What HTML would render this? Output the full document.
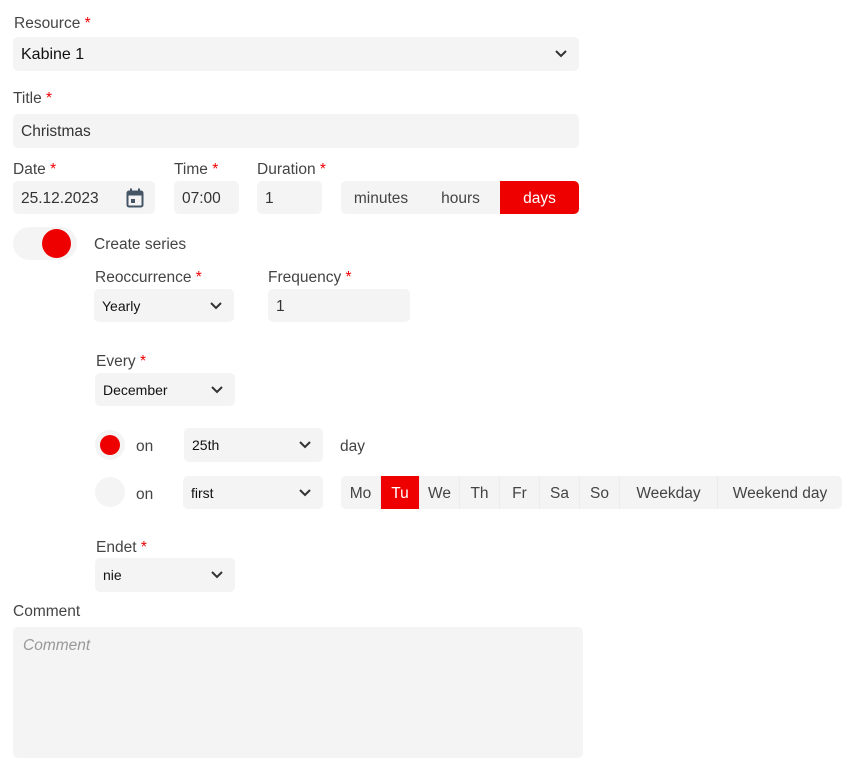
<!DOCTYPE html>
<html><head><style>
*{box-sizing:border-box;margin:0;padding:0}
body{width:858px;height:768px;background:#fff;font-family:"Liberation Sans",Arial,sans-serif;color:#333;position:relative;overflow:hidden}
.a{position:absolute}
.lbl{position:absolute;font-size:15.5px;color:#444;line-height:18px;margin-top:1px}
.lbl b{color:#e00;font-weight:normal}
.box{position:absolute;background:#f4f4f4;border-radius:5px;font-size:15.5px;color:#333;display:flex;align-items:center;padding-left:8px;padding-top:2px}
.sm{font-size:14px;color:#111;padding-top:0}
.chev{position:absolute;right:12px;top:50%;margin-top:-4px}
.seg{position:absolute;display:flex;background:#f4f4f4;border-radius:5px;overflow:hidden;font-size:15.5px;color:#444}
.seg div{display:flex;align-items:center;justify-content:center;border-right:1px solid #ececec;padding-top:2px}
.seg .on{background:#e00;color:#fff}
.t{position:absolute;font-size:15.5px;color:#444}
</style></head><body>
<div class="lbl" style="left:14px;top:14px">Resource <b>*</b></div>
<div class="box" style="left:13px;top:37px;width:566px;height:34px;color:#111;font-size:16px">Kabine 1<svg class="chev" width="12" height="8" viewBox="0 0 12 8"><path d="M1 1l5 5 5-5" stroke="#333" stroke-width="2" fill="none"/></svg></div>
<div class="lbl" style="left:13px;top:89px">Title <b>*</b></div>
<div class="box" style="left:13px;top:114px;width:566px;height:34px">Christmas</div>
<div class="lbl" style="left:13px;top:160px">Date <b>*</b></div>
<div class="lbl" style="left:174px;top:160px">Time <b>*</b></div>
<div class="lbl" style="left:257px;top:160px">Duration <b>*</b></div>
<div class="box" style="left:13px;top:181px;width:142px;height:33px">25.12.2023
<svg class="a" style="left:113px;top:7px" width="18" height="20" viewBox="0 0 18 20"><rect x="1.5" y="3.5" width="15" height="15" rx="1.5" stroke="#456" stroke-width="2" fill="none"/><rect x="1.5" y="3.5" width="15" height="4" fill="#456"/><rect x="4" y="0.5" width="2" height="4" fill="#456"/><rect x="12" y="0.5" width="2" height="4" fill="#456"/><rect x="5" y="11" width="4" height="4" fill="#456"/></svg></div>
<div class="box" style="left:174px;top:181px;width:65px;height:33px">07:00</div>
<div class="box" style="left:257px;top:181px;width:65px;height:33px">1</div>
<div class="seg" style="left:341px;top:181px;width:238px;height:33px"><div style="width:80px;border:0">minutes</div><div style="width:79px;border:0">hours</div><div class="on" style="width:79px;border:0">days</div></div>
<div class="a" style="left:13px;top:227px;width:64px;height:33px;border-radius:17px;background:#f4f4f4"></div>
<div class="a" style="left:42px;top:229px;width:29px;height:29px;border-radius:50%;background:#e00"></div>
<div class="t" style="left:94px;top:236px">Create series</div>
<div class="lbl" style="left:95px;top:268px">Reoccurrence <b>*</b></div>
<div class="lbl" style="left:268px;top:268px">Frequency <b>*</b></div>
<div class="box sm" style="left:94px;top:289px;width:140px;height:33px">Yearly<svg class="chev" width="12" height="8" viewBox="0 0 12 8"><path d="M1 1l5 5 5-5" stroke="#333" stroke-width="2" fill="none"/></svg></div>
<div class="box" style="left:268px;top:289px;width:142px;height:33px">1</div>
<div class="lbl" style="left:96px;top:352px">Every <b>*</b></div>
<div class="box sm" style="left:95px;top:373px;width:140px;height:33px">December<svg class="chev" width="12" height="8" viewBox="0 0 12 8"><path d="M1 1l5 5 5-5" stroke="#333" stroke-width="2" fill="none"/></svg></div>
<div class="a" style="left:95px;top:430px;width:30px;height:30px;border-radius:50%;background:#f4f4f4"></div>
<div class="a" style="left:100px;top:435px;width:20px;height:20px;border-radius:50%;background:#e00"></div>
<div class="t" style="left:136px;top:438px">on</div>
<div class="box sm" style="left:184px;top:428px;width:139px;height:34px">25th<svg class="chev" width="12" height="8" viewBox="0 0 12 8"><path d="M1 1l5 5 5-5" stroke="#333" stroke-width="2" fill="none"/></svg></div>
<div class="t" style="left:340px;top:438px">day</div>
<div class="a" style="left:95px;top:477px;width:30px;height:30px;border-radius:50%;background:#f4f4f4"></div>
<div class="t" style="left:136px;top:486px">on</div>
<div class="box sm" style="left:183px;top:476px;width:140px;height:33px">first<svg class="chev" width="12" height="8" viewBox="0 0 12 8"><path d="M1 1l5 5 5-5" stroke="#333" stroke-width="2" fill="none"/></svg></div>
<div class="seg" style="left:341px;top:476px;width:501px;height:33px"><div style="width:40px">Mo</div><div class="on" style="width:39px">Tu</div><div style="width:40px">We</div><div style="width:40px">Th</div><div style="width:40px">Fr</div><div style="width:40px">Sa</div><div style="width:40px">So</div><div style="width:98px">Weekday</div><div style="width:124px;border:0">Weekend day</div></div>
<div class="lbl" style="left:96px;top:538px">Endet <b>*</b></div>
<div class="box sm" style="left:95px;top:558px;width:140px;height:34px">nie<svg class="chev" width="12" height="8" viewBox="0 0 12 8"><path d="M1 1l5 5 5-5" stroke="#333" stroke-width="2" fill="none"/></svg></div>
<div class="lbl" style="left:13px;top:602px">Comment</div>
<div class="a" style="left:13px;top:627px;width:570px;height:131px;background:#f4f4f4;border-radius:5px;padding:10px 10px;font-size:15.5px;font-style:italic;color:#999">Comment</div>
</body></html>
